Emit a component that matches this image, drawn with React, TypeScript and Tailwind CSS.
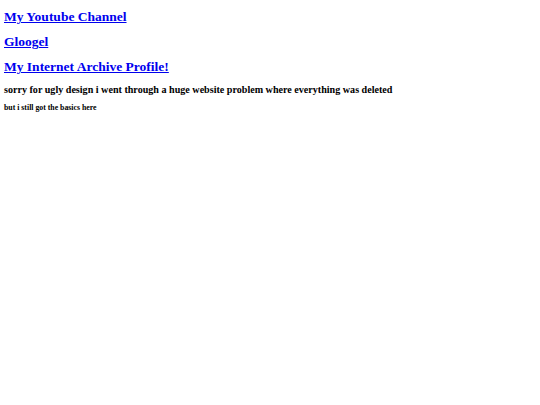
export default function App() {
  return (
    <div className="min-h-[405px] bg-white px-[4px] pt-[9.3px] font-['Liberation_Serif',serif] text-black">
      <h2 className="mb-[9.5px] text-[13.5px] font-bold leading-[1.15]">
        <a href="#" className="text-[#0000ee] underline">My Youtube Channel</a>
      </h2>
      <h2 className="mb-[9.5px] text-[13.5px] font-bold leading-[1.15]">
        <a href="#" className="text-[#0000ee] underline">Gloogel</a>
      </h2>
      <h2 className="mb-[9.5px] text-[13.5px] font-bold leading-[1.15]">
        <a href="#" className="text-[#0000ee] underline">My Internet Archive Profile!</a>
      </h2>
      <h3 className="mb-[7.7px] text-[10.1px] font-bold leading-[1.15]">
        sorry for ugly design i went through a huge website problem where everything was deleted
      </h3>
      <h5 className="text-[7.8px] font-bold leading-[1.15]">but i still got the basics here</h5>
    </div>
  )
}
